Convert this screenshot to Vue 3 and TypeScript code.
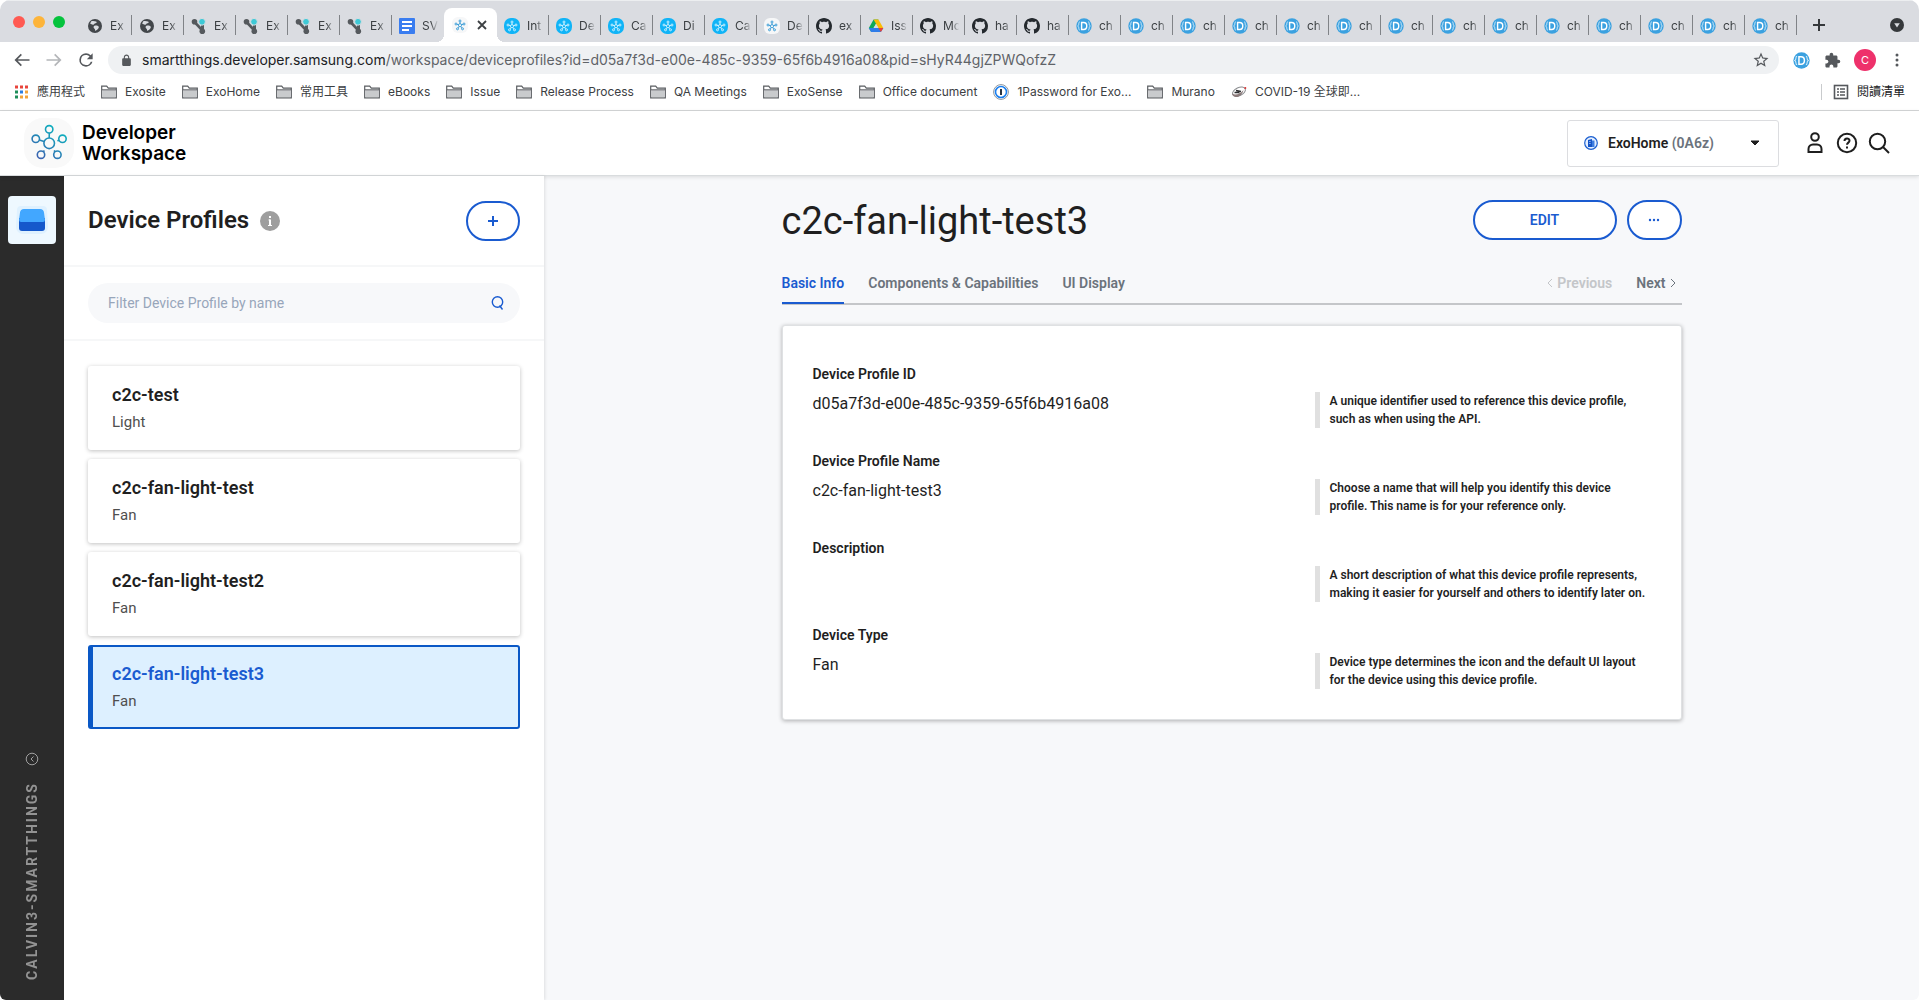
<script setup lang="ts">
import { ref } from 'vue'

interface BrowserTab {
  icon: string
  title: string
  active?: boolean
}

interface Profile {
  name: string
  type: string
}

interface Field {
  label: string
  value: string
  hint: string
}

const many = (icon: string, titles: string[]): BrowserTab[] => titles.map((title) => ({ icon, title }))

const browserTabs: BrowserTab[] = [
  ...many('globe', ['Ex', 'Ex']),
  ...many('branch', ['Ex', 'Ex', 'Ex', 'Ex']),
  { icon: 'docs', title: 'SV' },
  { icon: 'st-light', title: '', active: true },
  ...many('st-blue', ['Int', 'De', 'Ca', 'Di', 'Ca']),
  { icon: 'st-light', title: 'De' },
  { icon: 'github', title: 'ex' },
  { icon: 'drive', title: 'Iss' },
  ...many('github', ['Mc', 'ha', 'ha']),
  ...many('dchip', Array.from({ length: 14 }, () => 'ch')),
]

const bookmarks = [
  { icon: 'apps', label: '應用程式' },
  { icon: 'folder', label: 'Exosite' },
  { icon: 'folder', label: 'ExoHome' },
  { icon: 'folder', label: '常用工具' },
  { icon: 'folder', label: 'eBooks' },
  { icon: 'folder', label: 'Issue' },
  { icon: 'folder', label: 'Release Process' },
  { icon: 'folder', label: 'QA Meetings' },
  { icon: 'folder', label: 'ExoSense' },
  { icon: 'folder', label: 'Office document' },
  { icon: 'onepass', label: '1Password for Exo...' },
  { icon: 'folder', label: 'Murano' },
  { icon: 'covid', label: 'COVID-19 全球即...' },
]

const profiles: Profile[] = [
  { name: 'c2c-test', type: 'Light' },
  { name: 'c2c-fan-light-test', type: 'Fan' },
  { name: 'c2c-fan-light-test2', type: 'Fan' },
  { name: 'c2c-fan-light-test3', type: 'Fan' },
]
const selected = ref('c2c-fan-light-test3')

const sections = ['Basic Info', 'Components & Capabilities', 'UI Display']
const section = ref('Basic Info')

const fields: Field[] = [
  {
    label: 'Device Profile ID',
    value: 'd05a7f3d-e00e-485c-9359-65f6b4916a08',
    hint: 'A unique identifier used to reference this device profile,\nsuch as when using the API.',
  },
  {
    label: 'Device Profile Name',
    value: 'c2c-fan-light-test3',
    hint: 'Choose a name that will help you identify this device\nprofile. This name is for your reference only.',
  },
  {
    label: 'Description',
    value: '',
    hint: 'A short description of what this device profile represents,\nmaking it easier for yourself and others to identify later on.',
  },
  {
    label: 'Device Type',
    value: 'Fan',
    hint: 'Device type determines the icon and the default UI layout\nfor the device using this device profile.',
  },
]

const host = ref('smartthings.developer.samsung.com')
const path = ref('/workspace/deviceprofiles?id=d05a7f3d-e00e-485c-9359-65f6b4916a08&pid=sHyR44gjZPWQofzZ')
const filter = ref('')
</script>

<template>
  <div class="window">
    <svg class="sprite" aria-hidden="true">
      <symbol id="i-globe" viewBox="0 0 16 16">
        <circle cx="8" cy="8" r="7" fill="#43474b" />
        <path d="M4 3.400C5.600 2.600 7.600 3 9 3.600c1.400.6.8 1.400-.4 1.600-1.600.2-1.200 1.400-2.400 1.600C4.800 7 4.600 5.800 3.200 5.800M7.400 7.800c1.600-.4 3.400-.2 4.200.8.8 1.200-.6 2.600-1.800 3.400-1.200.8-2.200 1-1.800-.2.2-1-.8-1-1.200-1.800-.4-.8-.2-1.800.6-2.200z" fill="#d9dce1" />
      </symbol>
      <symbol id="i-branch" viewBox="0 0 16 16">
        <path d="M3.500 4L11 12" stroke="#55595d" stroke-width="2.600" />
        <path d="M11.500 5v8" stroke="#55595d" stroke-width="3" />
        <circle cx="3.500" cy="3.800" r="2.800" fill="#55595d" />
        <circle cx="11.300" cy="13.200" r="2.800" fill="#55595d" />
        <circle cx="11" cy="3.800" r="3.400" fill="#3ec9d6" stroke="#d9dce1" />
      </symbol>
      <symbol id="i-docs" viewBox="0 0 16 16">
        <rect width="16" height="16" rx="1" fill="#3a7df0" />
        <path d="M3 4h10M3 8h10M3 12h7" stroke="#fff" stroke-width="1.800" />
      </symbol>
      <symbol id="i-flower" viewBox="0 0 16 16">
        <g fill="none" stroke="currentColor">
          <circle cx="8" cy="8.200" r="1.600" />
          <circle cx="8" cy="4" r="1" />
          <circle cx="4" cy="7" r="1" />
          <circle cx="12" cy="7" r="1" />
          <circle cx="5.500" cy="11.800" r="1" />
          <circle cx="10.500" cy="11.800" r="1" />
          <path d="M8 5v1.600M5 7.300l1.500.5M11 7.300l-1.500.5M6.100 10.900l1-1.300M9.900 10.900l-1-1.300" />
        </g>
      </symbol>
      <symbol id="i-st-blue" viewBox="0 0 16 16">
        <rect width="16" height="16" rx="7" fill="#10b4f7" />
        <use href="#i-flower" color="#c9f0ff" />
      </symbol>
      <symbol id="i-st-light" viewBox="0 0 16 16">
        <rect width="16" height="16" rx="6" fill="#f6f7f8" />
        <use href="#i-flower" color="#3f9fd8" />
      </symbol>
      <symbol id="i-github" viewBox="0 0 16 16">
        <path fill="#24292e" d="M8 0C3.580 0 0 3.580 0 8c0 3.540 2.290 6.530 5.470 7.590.4.07.55-.17.55-.38 0-.19-.01-.82-.01-1.490-2.010.37-2.530-.49-2.690-.94-.09-.23-.48-.94-.82-1.130-.28-.15-.68-.52-.01-.53.63-.01 1.080.58 1.230.82.72 1.210 1.870.87 2.330.66.07-.52.28-.87.51-1.070-1.780-.2-3.640-.89-3.640-3.950 0-.87.31-1.590.82-2.150-.08-.2-.36-1.020.08-2.120 0 0 .67-.21 2.200.82.64-.18 1.320-.27 2-.27s1.360.09 2 .27c1.530-1.040 2.200-.82 2.200-.82.44 1.100.16 1.920.08 2.120.51.56.82 1.270.82 2.150 0 3.070-1.870 3.750-3.650 3.950.29.25.54.73.54 1.480 0 1.070-.01 1.930-.01 2.200 0 .21.15.46.55.38A8.010 8.010 0 0 0 16 8c0-4.420-3.580-8-8-8z" />
      </symbol>
      <symbol id="i-drive" viewBox="0 0 16 16">
        <path d="M5.600 1.500h4.800L8 5.700 3.200 14 .8 10z" fill="#0fa958" />
        <path d="M10.400 1.500L15.300 10h-4.900L5.600 1.500z" fill="#fbbc05" />
        <path d="M.8 10l2.400 4h9.700l2.400-4H5.600z" fill="#2f7de9" />
        <path d="M15.300 10l-2.400 4-2.500-4z" fill="#e94235" />
        <path d="M8 5.900L5.600 10h4.800z" fill="#d9dce1" />
      </symbol>
      <symbol id="i-dchip" viewBox="0 0 16 16">
        <circle cx="8" cy="8" r="7.700" fill="#3ba1e0" />
        <path d="M3.900 4c-1 0-1.100.6-1.100 1.500S2.700 7.500 1.700 8c1 .5 1.100 1.600 1.100 2.500s.1 1.500 1.100 1.500M12.100 4c1 0 1.100.6 1.100 1.500s.1 2 1.100 2.500c-1 .5-1.100 1.600-1.100 2.500s-.1 1.500-1.100 1.500" fill="none" stroke="#d6edfa" />
        <path d="M5.600 4.500v7h2c4.200 0 4.200-7 0-7z" fill="none" stroke="#fff" stroke-width="1.400" />
      </symbol>
      <symbol id="i-apps" viewBox="0 0 16 16">
        <path d="M2 1.500h3v3H2zM7 1.500h3v3H7zM12 1.500h3v3h-3z" fill="#e8453c" />
        <path d="M2 6.500h3v3H2zM2 11.500h3v3H2z" fill="#1e8e5a" />
        <path d="M7 6.500h3v3H7z" fill="#2a7de1" />
        <path d="M12 6.500h3v3h-3zM7 11.500h3v3H7zM12 11.500h3v3h-3z" fill="#f2a33a" />
      </symbol>
      <symbol id="i-folder" viewBox="0 0 16 16">
        <path d="M.7 13.800V2.200h5l1.600 2h8v9.600z" fill="#fff" stroke="#5a5d61" stroke-width="1.200" />
        <path d="M1.300 6h13.400v7.200H1.300z" fill="#c9cbcd" />
        <path d="M1 5.800h14" stroke="#5a5d61" />
      </symbol>
      <symbol id="i-onepass" viewBox="0 0 16 16">
        <circle cx="8" cy="8" r="7.400" fill="#fff" stroke="#8d949b" />
        <circle cx="8" cy="8" r="5.500" fill="#fff" stroke="#1a7ff0" stroke-width="1.600" />
        <path d="M8 5v6" stroke="#2b3440" stroke-width="2" />
      </symbol>
      <symbol id="i-covid" viewBox="0 0 16 16">
        <ellipse cx="8" cy="7.600" rx="6.800" ry="4" transform="rotate(-24 8 7.600)" fill="#fff" stroke="#8a8c8f" />
        <path d="M1 9.500c3 2 8 .8 11.500-3.500-1 4-4 7.500-8 7C2.500 12.800 1 11 1 9.500z" fill="#8b7a7a" />
        <path d="M3.500 8.500h5M5 6.500l5 1" stroke="#2e2e30" stroke-width="1.400" />
        <circle cx="14.300" cy="4" r="1" fill="#d33" />
      </symbol>
    </svg>

    <header class="chrome">
      <div class="tabstrip">
        <div class="lights"><i class="red"></i><i class="amber"></i><i class="green"></i></div>
        <div class="tabs" role="tablist" aria-label="Browser tabs">
          <button
            v-for="(tab, i) in browserTabs"
            :key="i"
            class="tab"
            :class="{ active: tab.active, bare: browserTabs[i + 1]?.active }"
            role="tab"
            type="button"
            :aria-selected="!!tab.active"
          >
            <svg class="fav"><use :href="'#i-' + tab.icon" /></svg>
            <span v-if="!tab.active" class="tab-title">{{ tab.title }}</span>
            <svg v-else class="close" viewBox="0 0 10 10"><path d="M1 1l8 8M9 1l-8 8" stroke="#3c4043" stroke-width="1.800" /></svg>
          </button>
        </div>
        <button class="new-tab" type="button" aria-label="New tab">
          <svg viewBox="0 0 14 14"><path d="M7 1v12M1 7h12" stroke="#35383b" stroke-width="2" /></svg>
        </button>
        <button class="tab-search" type="button" aria-label="Search tabs">
          <svg viewBox="0 0 14 14"><circle cx="7" cy="7" r="7" fill="#35383b" /><path d="M4.200 5.200h5.600L7 9.400z" fill="#dadce1" /></svg>
        </button>
      </div>

      <div class="toolbar">
        <button type="button" class="tool" aria-label="Back">
          <svg viewBox="0 0 24 24"><path fill="#55585c" d="M21 11H6.830l5.080-5.090L10.500 4.500 3 12l7.500 7.500 1.410-1.410L6.830 13H21z" /></svg>
        </button>
        <button type="button" class="tool" aria-label="Forward">
          <svg viewBox="0 0 24 24"><path fill="#b4b6b9" d="M3 11h14.170l-5.080-5.090L13.500 4.500 21 12l-7.500 7.500-1.410-1.410L17.170 13H3z" /></svg>
        </button>
        <button type="button" class="tool" aria-label="Reload">
          <svg viewBox="0 0 24 24"><path fill="#55585c" d="M17.650 6.350A7.960 7.960 0 0 0 12 4a8 8 0 1 0 7.730 10h-2.080A6 6 0 1 1 12 6c1.660 0 3.140.69 4.220 1.780L13 11h7V4z" /></svg>
        </button>
        <div class="omnibox">
          <svg class="lock" viewBox="0 0 24 24"><path fill="#55585c" d="M18 8h-1V6c0-2.760-2.240-5-5-5S7 3.240 7 6v2H6c-1.100 0-2 .9-2 2v10c0 1.100.9 2 2 2h12c1.100 0 2-.9 2-2V10c0-1.100-.9-2-2-2zM9 8V6a3 3 0 0 1 6 0v2z" /></svg>
          <input v-model="host" class="url host" aria-label="Site address" />
          <input v-model="path" class="url path" aria-label="Page path" />
          <button type="button" class="star" aria-label="Bookmark this page">
            <svg viewBox="0 0 24 24"><path fill="#55585c" d="M22 9.240l-7.190-.62L12 2 9.190 8.630 2 9.240l5.460 4.730L5.820 21 12 17.270 18.180 21l-1.630-7.030zM12 15.400l-3.760 2.270 1-4.280-3.320-2.880 4.380-.38L12 6.100l1.710 4.040 4.380.38-3.320 2.880 1 4.280z" /></svg>
          </button>
        </div>
        <div class="extensions">
          <button type="button" aria-label="Extension"><svg width="17" height="17"><use href="#i-dchip" /></svg></button>
          <button type="button" aria-label="Extensions">
            <svg width="17" height="17" viewBox="0 0 24 24"><path fill="#55585c" d="M20.500 11H19V7c0-1.100-.9-2-2-2h-4V3.500C13 2.120 11.880 1 10.500 1S8 2.120 8 3.500V5H4c-1.100 0-1.990.9-1.990 2v3.800H3.500c1.490 0 2.700 1.210 2.700 2.700s-1.210 2.700-2.700 2.700H2V20c0 1.100.9 2 2 2h3.800v-1.500c0-1.490 1.210-2.700 2.700-2.700s2.700 1.210 2.700 2.700V22H17c1.100 0 2-.9 2-2v-4h1.500a2.500 2.500 0 0 0 0-5z" /></svg>
          </button>
          <button type="button" class="avatar" aria-label="Account">C</button>
          <button type="button" aria-label="Menu">
            <svg width="16" height="16" viewBox="0 0 16 16" fill="#55585c"><circle cx="8" cy="3" r="1.500" /><circle cx="8" cy="8" r="1.500" /><circle cx="8" cy="13" r="1.500" /></svg>
          </button>
        </div>
      </div>

      <nav class="bookmarks" aria-label="Bookmarks">
        <a v-for="b in bookmarks" :key="b.label" href="#"><svg class="fav"><use :href="'#i-' + b.icon" /></svg>{{ b.label }}</a>
        <a class="reading" href="#">
          <svg class="fav" viewBox="0 0 16 16"><rect x="1.500" y="1.500" width="13" height="13" fill="none" stroke="#55585c" stroke-width="1.600" /><path d="M4 5h2M7 5h5M4 8h2M7 8h5M4 11h2M7 11h5" stroke="#55585c" stroke-width="1.300" /></svg>閱讀清單
        </a>
      </nav>
    </header>

    <header class="appbar">
      <a class="brand" href="#">
        <svg class="logo" viewBox="0 0 50 50">
          <defs>
            <linearGradient id="logo-ink" gradientUnits="userSpaceOnUse" x1="36" y1="10" x2="15" y2="40">
              <stop offset="0" stop-color="#0bb4bf" />
              <stop offset="1" stop-color="#3b62b0" />
            </linearGradient>
          </defs>
          <rect width="50" height="50" rx="19" fill="#f9f9f9" />
          <g fill="none" stroke="url(#logo-ink)" stroke-width="1.600">
            <circle cx="25.200" cy="25.300" r="5.300" />
            <circle cx="25.200" cy="11.300" r="3.700" />
            <circle cx="11.800" cy="20.800" r="3.700" />
            <circle cx="38.500" cy="20.800" r="3.700" />
            <circle cx="17" cy="36.700" r="3.700" />
            <circle cx="33.400" cy="36.700" r="3.700" />
            <path d="M25.300 15L25.200 20M15.400 22l4.700 1.500M35 22l-1.500 1M19.400 33.800l1-1.300M31 33.800l-1-1.300" />
          </g>
        </svg>
        <span>Developer<br />Workspace</span>
      </a>
      <div class="account">
        <button class="org" type="button" aria-haspopup="listbox">
          <svg width="14" height="14" viewBox="0 0 14 14"><circle cx="7" cy="7" r="6.300" fill="#e4efff" stroke="#1b5fd0" stroke-width="1.200" /><path d="M4 4l4-1v8H4z" fill="#1454c6" /><path d="M8 4.500h2.500V11H8z" fill="#3d7de0" /><path d="M5.200 5.500h1.400M5.200 7.500h1.400" stroke="#bcd5ff" stroke-width=".8" /></svg>
          <span class="org-name">ExoHome <span class="org-id">(0A6z)</span></span>
          <svg class="caret" width="10" height="6" viewBox="0 0 10 6"><path d="M1 1h8L5 5z" fill="#1f1f1f" stroke="#1f1f1f" stroke-linejoin="round" /></svg>
        </button>
        <div class="appbar-icons">
          <button type="button" aria-label="Profile">
            <svg viewBox="0 0 24 24"><circle cx="12" cy="6" r="3.800" /><path d="M5.500 21v-3a4.500 4.500 0 0 1 4.500-4.500h4a4.500 4.500 0 0 1 4.500 4.500v3z" /></svg>
          </button>
          <button type="button" aria-label="Help">
            <svg viewBox="0 0 24 24"><circle cx="12" cy="12" r="9.200" /><path d="M9.500 10c0-3.400 5-3.300 5-.3 0 1.900-2.500 2-2.500 4.100M12 15.400v2" /></svg>
          </button>
          <button type="button" aria-label="Search">
            <svg viewBox="0 0 24 24"><circle cx="10.500" cy="10.500" r="7.700" /><path d="M16 16l6 6" /></svg>
          </button>
        </div>
      </div>
    </header>

    <div class="body">
      <aside class="rail">
        <a class="rail-item" href="#" aria-label="Device Profiles">
          <svg viewBox="0 0 48 48">
            <path d="M13 10h22a4 4 0 0 1 4 4l1 17a7 7 0 0 1-7 7H15a7 7 0 0 1-7-7l1-17a4 4 0 0 1 4-4z" fill="#dff1ff" />
            <path d="M11 22h26v10a3 3 0 0 1-3 3H14a3 3 0 0 1-3-3z" fill="#1558cb" />
            <path d="M16 13h16a4 4 0 0 1 4 3.500l1 7.500a2 2 0 0 1-2 2H13a2 2 0 0 1-2-2l1-7.500A4 4 0 0 1 16 13z" fill="#42a7ff" />
          </svg>
        </a>
        <button class="workspace" type="button">
          <span>CALVIN3-SMARTTHINGS</span>
          <svg viewBox="0 0 14 14"><circle cx="7" cy="7" r="5.800" /><path d="M8.500 4.500L6 7l2.500 2.500" /></svg>
        </button>
      </aside>

      <section class="panel">
        <div class="panel-head">
          <h1>Device Profiles</h1>
          <svg class="info" viewBox="0 0 20 20"><circle cx="10" cy="10" r="10" fill="#9e9e9e" /><path d="M10 5v2M10 8.500V15" stroke="#fff" stroke-width="2" /><path d="M8.500 9H10M8 14.500h4" stroke="#fff" /></svg>
          <button class="pill add" type="button" aria-label="Add device profile">
            <svg width="10" height="10" viewBox="0 0 10 10"><path d="M5 0v10M0 5h10" stroke="#1a5bd0" stroke-width="2" /></svg>
          </button>
        </div>
        <div class="panel-search">
          <label class="filter">
            <input v-model="filter" type="text" placeholder="Filter Device Profile by name" aria-label="Filter Device Profile by name" />
            <svg viewBox="0 0 14 16"><circle cx="6.500" cy="7" r="5.200" /><path d="M8.500 10.500l3 4" /></svg>
          </label>
        </div>
        <ul class="profiles">
          <li v-for="p in profiles" :key="p.name">
            <button type="button" class="profile" :class="{ current: p.name === selected }" @click="selected = p.name">
              <strong>{{ p.name }}</strong>
              <span>{{ p.type }}</span>
            </button>
          </li>
        </ul>
      </section>

      <main class="main">
        <div class="content">
          <div class="title-row">
            <h2>c2c-fan-light-test3</h2>
            <button class="pill edit" type="button">EDIT</button>
            <button class="pill more" type="button" aria-label="More actions">
              <svg width="12" height="4" viewBox="0 0 12 4" fill="#1a5bd0"><circle cx="2" cy="2" r="1.200" /><circle cx="6" cy="2" r="1.200" /><circle cx="10" cy="2" r="1.200" /></svg>
            </button>
          </div>
          <nav class="sections">
            <a v-for="s in sections" :key="s" href="#" :class="{ current: s === section }" @click.prevent="section = s">{{ s }}</a>
            <button class="step previous" type="button" disabled>
              <svg viewBox="0 0 6 10"><path d="M5 1L1 5l4 4" /></svg>Previous
            </button>
            <button class="step" type="button">
              Next<svg viewBox="0 0 6 10"><path d="M1 1l4 4-4 4" /></svg>
            </button>
          </nav>
          <dl class="card">
            <div v-for="f in fields" :key="f.label" class="field">
              <dt>{{ f.label }}</dt>
              <dd class="value">{{ f.value }}</dd>
              <dd class="hint">{{ f.hint }}</dd>
            </div>
          </dl>
        </div>
      </main>
    </div>
  </div>
</template>

<style>
body {
  margin: 0;
  background: #fff;
}
</style>

<style scoped>
* {
  box-sizing: border-box;
}
button,
input {
  font: inherit;
  color: inherit;
  border: 0;
  padding: 0;
  background: none;
}
button {
  display: flex;
  align-items: center;
  justify-content: center;
}
a {
  color: inherit;
  text-decoration: none;
}
svg {
  flex: none;
  display: block;
}
.sprite {
  position: absolute;
  width: 0;
  height: 0;
}
.window {
  min-height: 100vh;
  display: flex;
  flex-direction: column;
  border-radius: 10px 10px 6px 6px;
  overflow: hidden;
  font-family: Roboto, 'Noto Sans CJK TC', sans-serif;
  color: #1f1f1f;
}

/* browser frame */
.chrome {
  font-family: Inter, 'Noto Sans CJK TC', sans-serif;
  color: #3c4043;
  border-bottom: 1px solid #d5d7d8;
}
.tabstrip {
  height: 42px;
  display: flex;
  align-items: center;
  background: #dadce1;
  border-top: 1px solid #eceef0;
}
.lights {
  width: 80px;
  flex: none;
  display: flex;
  gap: 8px;
  padding-left: 13px;
}
.lights i {
  width: 12px;
  height: 12px;
  border-radius: 50%;
}
.red {
  background: #ff5a52;
}
.amber {
  background: #fdb43a;
}
.green {
  background: #05c33d;
}
.tabs {
  display: flex;
  align-self: stretch;
}
.tab {
  position: relative;
  width: 52px;
  height: 41px;
  padding: 8px 0 0 7px;
  justify-content: flex-start;
  gap: 7px;
  font-size: 12px;
}
.tab::after {
  content: '';
  position: absolute;
  right: 0;
  top: 14px;
  width: 1px;
  height: 20px;
  background: #808387;
}
.tab.bare::after {
  display: none;
}
.tab.active {
  width: 53px;
  height: 34px;
  margin-top: 7px;
  padding: 0 0 0 8px;
  gap: 9px;
  background: #fff;
  border-radius: 8px 8px 0 0;
}
.tab.active::before,
.tab.active::after {
  content: '';
  position: absolute;
  top: auto;
  bottom: 0;
  width: 8px;
  height: 8px;
}
.tab.active::before {
  left: -8px;
  background: radial-gradient(circle at 0 0, transparent 8px, #fff 8px);
}
.tab.active::after {
  right: -8px;
  background: radial-gradient(circle at 100% 0, transparent 8px, #fff 8px);
}
.tab-title {
  width: 18px;
  white-space: nowrap;
  text-align: left;
  mask-image: linear-gradient(90deg, #000 50%, transparent 90%);
}
.fav {
  width: 16px;
  height: 16px;
}
.close {
  width: 10px;
  height: 10px;
}
.new-tab {
  margin: 6px 0 0 15px;
}
.new-tab svg,
.tab-search svg {
  width: 14px;
  height: 14px;
}
.tab-search {
  margin: 6px 15px 0 auto;
}
.toolbar {
  display: flex;
  align-items: center;
  height: 36px;
  padding: 0 14px 0 12px;
}
.tool {
  width: 32px;
  justify-content: flex-start;
}
.tool svg {
  width: 20px;
  height: 20px;
}
.omnibox {
  flex: 1;
  display: flex;
  align-items: center;
  height: 28px;
  padding: 0 9px 0 12px;
  background: #eff1f3;
  border-radius: 14px;
}
.lock {
  width: 13px;
  height: 13px;
  margin-right: 9px;
}
.url {
  font-size: 14px;
  line-height: 20px;
  field-sizing: content;
  outline: 0;
}
.host {
  color: #202124;
}
.path {
  color: #5f6368;
}
.star {
  margin-left: auto;
}
.star svg {
  width: 18px;
  height: 18px;
}
.extensions {
  display: flex;
  align-items: center;
  gap: 14px;
  margin-left: 14px;
}
.extensions .avatar {
  width: 22px;
  height: 22px;
  margin: 0 -1px;
  border-radius: 50%;
  background: #ee316b;
  color: #fff;
  font-size: 11px;
}
.bookmarks {
  display: flex;
  align-items: center;
  gap: 16px;
  height: 32px;
  padding: 0 14px 4px 13px;
  font-size: 12px;
  white-space: nowrap;
}
.bookmarks a {
  display: flex;
  align-items: center;
  gap: 8px;
  line-height: 16px;
}
.bookmarks .reading {
  margin-left: auto;
  padding-left: 11px;
  border-left: 1px solid #c9cbcd;
  color: #202124;
}

/* app header */
.appbar {
  position: relative;
  display: flex;
  align-items: center;
  justify-content: space-between;
  height: 65px;
  padding: 0 28px 0 24px;
  background: #fff;
  border-bottom: 1px solid #d9dcde;
  box-shadow: 0 1px 4px rgba(0, 0, 0, 0.12);
}
.brand {
  display: flex;
  align-items: center;
  gap: 8px;
  font-family: Inter, sans-serif;
  font-size: 19px;
  font-weight: 600;
  line-height: 21px;
  color: #000;
}
.logo {
  width: 50px;
  height: 50px;
}
.account {
  display: flex;
  align-items: center;
  gap: 24px;
}
.org {
  width: 212px;
  height: 47px;
  padding: 0 18px 0 16px;
  border: 1px solid #dcdde0;
  border-radius: 3px;
  gap: 10px;
  font-size: 14px;
  font-weight: 600;
}
.org-id {
  color: #6b737c;
}
.caret {
  margin-left: auto;
}
.appbar-icons {
  display: flex;
  gap: 8px;
}
.appbar-icons svg {
  width: 24px;
  height: 24px;
  fill: none;
  stroke: #1f1f1f;
  stroke-width: 2;
}

/* layout below the header */
.body {
  flex: 1;
  display: flex;
}
.rail {
  flex: none;
  width: 64px;
  display: flex;
  flex-direction: column;
  align-items: center;
  justify-content: space-between;
  padding: 20px 0;
  background: #2b2b2b;
}
.rail-item {
  width: 48px;
  height: 48px;
  border-radius: 4px;
  background: #eef8ff;
}
.workspace {
  flex-direction: column-reverse;
  gap: 16px;
  color: #939393;
}
.workspace span {
  writing-mode: vertical-rl;
  transform: rotate(180deg);
  font-size: 14px;
  font-weight: 700;
  line-height: 20px;
  letter-spacing: 2px;
}
.workspace svg {
  width: 14px;
  height: 14px;
  fill: none;
  stroke: #a0a0a0;
}
.panel {
  position: relative;
  flex: none;
  width: 480px;
  background: #fff;
  box-shadow: 1px 0 3px rgba(0, 0, 0, 0.1);
}
.panel-head {
  display: flex;
  align-items: center;
  height: 91px;
  padding: 0 24px;
  border-bottom: 2px solid #f6f7f8;
}
.panel-head h1 {
  margin: 0 11px 0 0;
  padding-bottom: 2px;
  font-size: 24px;
  font-weight: 600;
  line-height: 32px;
}
.info {
  width: 20px;
  height: 20px;
}
.pill {
  height: 40px;
  border: 2px solid #1a5bd0;
  border-radius: 20px;
  background: #fff;
  color: #1a5bd0;
  font-size: 14px;
  font-weight: 600;
}
.add {
  width: 54px;
  margin-left: auto;
}
.panel-search {
  padding: 16px 24px;
  border-bottom: 2px solid #f6f7f8;
}
.filter {
  display: flex;
  align-items: center;
  height: 40px;
  padding: 0 15px 0 20px;
  border-radius: 20px;
  background: #f7f8fa;
}
.filter input {
  flex: 1;
  font-size: 14px;
  outline: 0;
}
.filter input::placeholder {
  color: #98a6ba;
  opacity: 1;
}
.filter svg {
  width: 14px;
  height: 16px;
  fill: none;
  stroke: #1a5bd0;
  stroke-width: 1.400;
}
.profiles {
  display: flex;
  flex-direction: column;
  gap: 9px;
  margin: 0;
  padding: 25px 24px;
  list-style: none;
}
.profile {
  width: 100%;
  height: 84px;
  padding: 15px 24px;
  flex-direction: column;
  align-items: flex-start;
  justify-content: flex-start;
  border-radius: 3px;
  background: #fff;
  box-shadow: 0 1px 4px rgba(0, 0, 0, 0.25);
  text-align: left;
}
.profile strong {
  font-size: 18px;
  font-weight: 600;
  line-height: 28px;
}
.profile span {
  font-size: 15px;
  line-height: 26px;
  color: #4f4f4f;
}
.profile.current {
  border: solid #0a58c6;
  border-width: 2px 2px 2px 5px;
  padding: 13px 22px 13px 19px;
  background: #ddf0ff;
  box-shadow: none;
}
.profile.current strong {
  color: #1a5bd0;
}

/* profile detail */
.main {
  flex: 1;
  padding: 24px 32px;
  background: #f7f8fa;
}
.content {
  max-width: 900px;
  margin: 0 auto;
}
.title-row {
  display: flex;
  align-items: center;
  gap: 10px;
  height: 40px;
}
.title-row h2 {
  flex: 1;
  margin: 0;
  padding-top: 2px;
  font-size: 38px;
  font-weight: 400;
  line-height: 42px;
}
.edit {
  width: 144px;
}
.more {
  width: 55px;
}
.sections {
  display: flex;
  align-items: center;
  gap: 24px;
  height: 43px;
  margin: 22px 0 20px;
  border-bottom: 2px solid #c4c6c9;
  font-size: 14px;
  font-weight: 600;
  color: #6b737c;
}
.sections a {
  height: 43px;
  line-height: 45px;
  border-bottom: 2px solid transparent;
}
.sections a.current {
  color: #1a5bd0;
  border-color: #1a5bd0;
}
.step {
  gap: 4px;
  padding-right: 6px;
}
.step svg {
  width: 6px;
  height: 10px;
  fill: none;
  stroke: currentColor;
}
.step.previous {
  margin-left: auto;
  padding: 0;
  color: #c4c6c9;
}
.card {
  margin: 0;
  padding: 35px 30px 30px;
  border: 1px solid #dfe1e3;
  border-radius: 3px;
  background: #fff;
  box-shadow: 0 1px 4px rgba(0, 0, 0, 0.3);
}
.field {
  display: grid;
  grid-template-columns: 1fr 336px;
  grid-template-rows: 28px 39px;
  height: 87px;
}
.field:last-child {
  height: 67px;
}
.field dt {
  font-size: 14px;
  font-weight: 600;
  line-height: 26px;
}
.field dd {
  margin: 0;
}
.value {
  grid-row: 2;
  font-size: 16px;
  line-height: 30px;
}
.field .hint {
  grid-row: 2;
  grid-column: 2;
  height: 36px;
  margin-top: 3px;
  border-left: 5px solid #e0e0e0;
  padding-left: 10px;
  font-size: 12px;
  font-weight: 600;
  line-height: 18px;
  white-space: pre-line;
}
</style>
